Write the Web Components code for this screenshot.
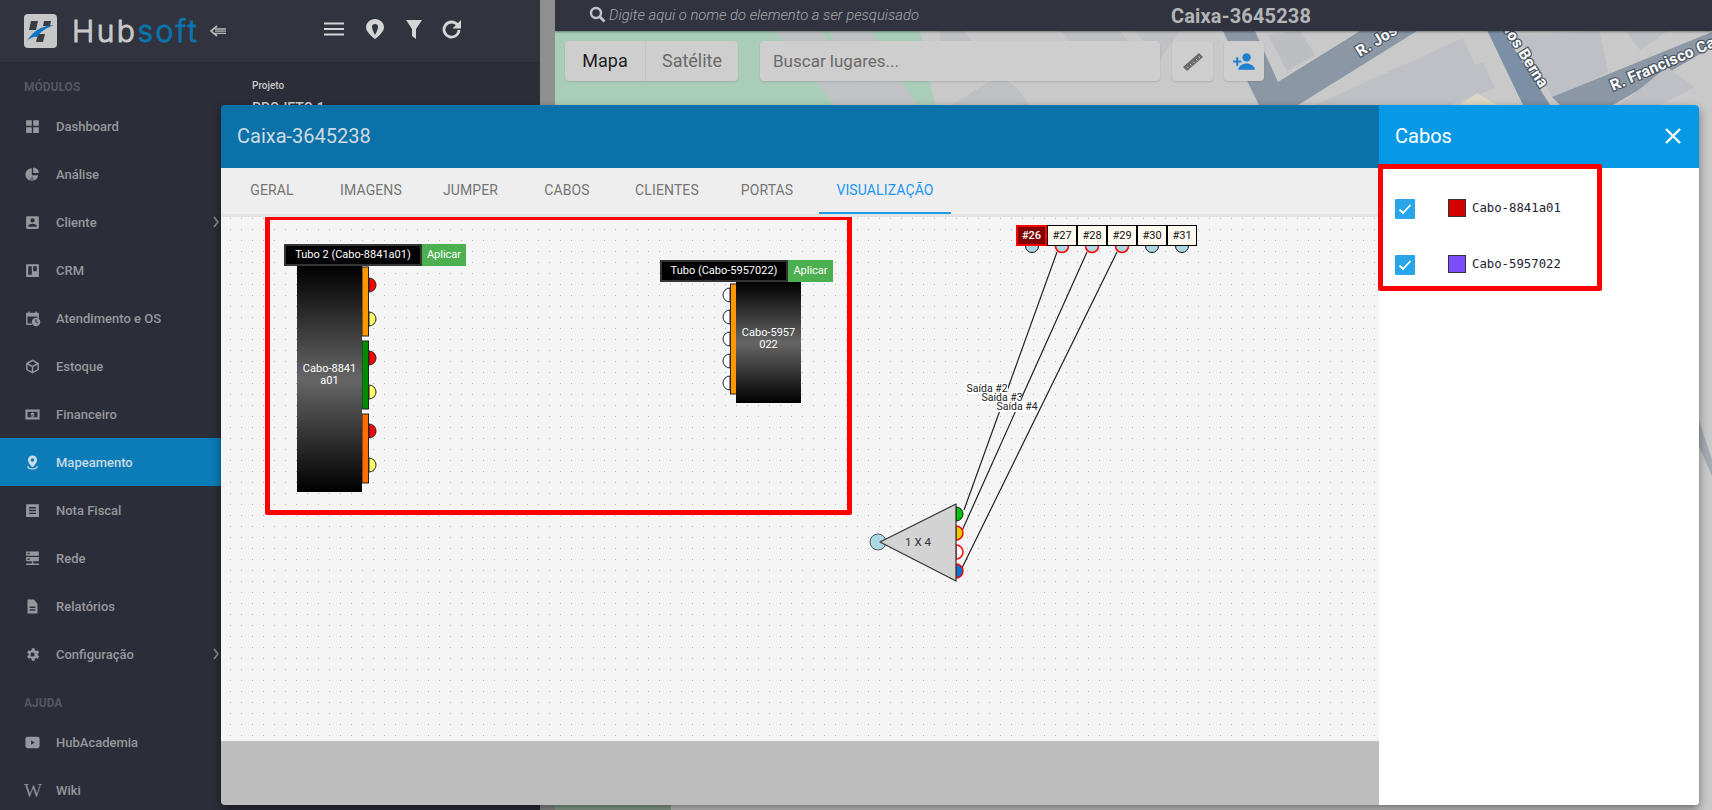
<!DOCTYPE html>
<html lang="pt-BR"><head><meta charset="utf-8"><title>Hubsoft</title>
<style>html,body{margin:0;padding:0;background:#2b2d38;overflow:hidden;font-family:Roboto,sans-serif}</style>
</head><body>
<hub-app></hub-app>
<script>
const ICONS={
dash:'<path d="M3 3h8v8H3zM13 3h8v8h-8zM3 13h8v8H3zM13 13h8v8h-8z"/>',
pie:'<path d="M11 3a9 9 0 1 0 9 10h-9z"/><path d="M13 2v8h8a8 8 0 0 0-8-8z"/><path d="M7 20l5-6 3 7z" fill="#2b2d38" opacity=".45"/>',
user:'<path d="M3 5v14a2 2 0 0 0 2 2h14a2 2 0 0 0 2-2V5a2 2 0 0 0-2-2H5a2 2 0 0 0-2 2zm12 4a3 3 0 1 1-6 0 3 3 0 0 1 6 0zM6 17c0-2 4-3.1 6-3.1s6 1.100 6 3.100v1H6z"/>',
crm:'<path fill-rule="evenodd" d="M3 3h18v18H3zM6 6v12h5V6zM13 6v7h5V6z"/>',
cal:'<path fill-rule="evenodd" d="M6 2h2v2h8V2h2v2h3v8h-2V9H5v10h6v2H3V4h3z"/><path fill-rule="evenodd" d="M17 11a6 6 0 1 0 0 12 6 6 0 0 0 0-12zm-1 2h1.500v3.500l2.500 1.500-.7 1.100-3.300-2z"/>',
box:'<path fill-rule="evenodd" d="M12 2l9 5v10l-9 5-9-5V7zm0 2.600L6.500 7.700 12 10.800l5.500-3.100zM5 9.400v6.400l6 3.300v-6.400zm14 0l-6 3.300v6.400l6-3.300z"/>',
cash:'<path fill-rule="evenodd" d="M2 5h20v14H2zM5 8v8h14V8z"/><path d="M11.300 9h1.400v.9h1.800v1.300h-2.900v.6h2.900v3.100h-1.500v.9h-1.400v-.9H9.700v-1.300h3v-.6h-3V9.900h1.600z"/>',
pin:'<path fill-rule="evenodd" d="M12 2a6.500 6.500 0 0 0-6.500 6.500C5.500 13 12 19 12 19s6.500-6 6.500-10.500A6.500 6.500 0 0 0 12 2zm0 4a2.500 2.500 0 1 1 0 5 2.500 2.500 0 0 1 0-5z"/><path d="M5.500 16.500c-3 2.500 2 5.500 6.500 5.500s9.500-3 6.500-5.500l-1.300 1.300c1.500 1.500-2 2.500-5.200 2.500s-6.700-1-5.200-2.500z"/>',
note:'<path fill-rule="evenodd" d="M3 3h18v18H3zM7 7v2h10V7zM7 11v2h10v-2zM7 15v2h10v-2z"/>',
net:'<path fill-rule="evenodd" d="M3 2h18v6H3zM3 10h18v6H3zM5 4v2h3V4zM5 12v2h3v-2z"/><path d="M11 16h2v3h8v2H3v-2h8z"/>',
doc:'<path fill-rule="evenodd" d="M5 2h9l5 6v14H5zM8 12v2h8v-2zM8 16v2h8v-2z"/>',
gear:'<path fill-rule="evenodd" d="M19.400 13a7.500 7.500 0 0 0 0-2l2.100-1.600-2-3.500-2.500 1a7.500 7.500 0 0 0-1.700-1L15 3.200h-4L10.700 5.900a7.500 7.500 0 0 0-1.700 1l-2.500-1-2 3.500L6.600 11a7.500 7.500 0 0 0 0 2l-2.100 1.600 2 3.500 2.500-1a7.500 7.500 0 0 0 1.700 1l.3 2.700h4l.3-2.700a7.500 7.500 0 0 0 1.700-1l2.500 1 2-3.500zM13 9a3 3 0 1 1-2 0z"/>',
play:'<path fill-rule="evenodd" d="M5 4h14a3 3 0 0 1 3 3v10a3 3 0 0 1-3 3H5a3 3 0 0 1-3-3V7a3 3 0 0 1 3-3zm5 5v6l5-3z"/>',
};
class El extends HTMLElement{
  render(css,html){const s=this.shadowRoot||this.attachShadow({mode:'open'});s.innerHTML=`<style>${css}</style>${html}`;}
}
class NavItem extends El{connectedCallback(){
  const a=this.hasAttribute('active'),arrow=this.hasAttribute('arrow'),i=this.getAttribute('icon');
  const icon=i==='wiki'?'<span class="w">W</span>':`<svg viewBox="0 0 24 24" width="17" height="17" fill="currentColor">${ICONS[i]}</svg>`;
  this.render(`:host{display:flex;align-items:center;height:48px;padding-left:24px;box-sizing:border-box;color:${a?'#c7dbe6':'#97989d'};background:${a?'#0b7cb7':'transparent'};font:500 13px/1 Roboto,sans-serif}
  .i{width:32px;display:flex;align-items:center}.w{font:400 19px/1 "Liberation Serif",serif;color:#8f9095}
  .a{position:absolute;left:212px;width:8px;height:12px}`,
  `<span class="i">${icon}</span><slot></slot>${arrow?'<svg class="a" viewBox="0 0 8 12"><path d="M2 1l4 5-4 5" fill="none" stroke="#8a8b90" stroke-width="1.600"/></svg>':''}`);
}}
class NavLabel extends El{connectedCallback(){
  this.render(`:host{display:block;height:24px;padding:13px 0 3px 24px;font:700 12px/24px Roboto,sans-serif;color:#55575f}:host(:first-of-type){padding:12px 0 3px 24px}`,'<slot></slot>');
}}
class HubLogo extends El{connectedCallback(){
  this.render(`:host{display:flex;align-items:center;height:63px;padding-left:24px;box-sizing:border-box;background:#31343f;border-bottom:1px solid #282a33}
  svg{display:block}.t{margin-left:15px;font:300 30px/1 Inter,sans-serif;letter-spacing:2.500px;color:#c9c9c9;width:133px;white-space:nowrap;-webkit-text-stroke:1px #c9c9c9}.t b{font-weight:300;color:#0b74ac;-webkit-text-stroke:1px #0b74ac}.b{margin-left:5px}`,
  `<svg width="33" height="34" viewBox="0 0 33 34"><rect width="33" height="34" rx="4" fill="#c7c7c7"/><path d="M7 7h7l-2 9H5zM20 7h7l-1 5h-7zM14 20h7l-2 8h-7z" fill="#3a3c44"/><path d="M3 27C9 17 17 12 30 11 22 14 16 18 13 23 10 22 6 24 3 27z" fill="#0b74c4"/></svg><span class="t">Hub<b>soft</b></span>
  <svg class="b" width="16" height="12" viewBox="0 0 16 12"><path d="M7 1L1 6l6 5M1 6h1" fill="none" stroke="#b8b8b8" stroke-width="1.800"/><path d="M5 4h11M5 6.200h11M5 8.400h11" stroke="#b8b8b8" stroke-width="1.300"/></svg>`);
}}
class HubSidebar extends El{connectedCallback(){
  this.render(`:host{display:block;background:#2b2d38;height:810px;overflow:hidden;position:relative}`,`<hub-logo></hub-logo><slot></slot>`);
}}
class ProjectPanel extends El{connectedCallback(){
  this.render(`:host{display:block;background:#2b2d38;height:810px;overflow:hidden;font-family:Roboto,sans-serif}
  .h{height:63px;background:#31343f;border-bottom:1px solid #282a33;box-sizing:border-box;display:flex;align-items:center;color:#d5d5d5;padding:0 0 4px 81px;gap:22px}
  .p{padding:17px 0 0 9px;color:#c9c9c9;font-size:10px;font-weight:500}.v{margin-top:9px;font-size:14px;color:#cfcfcf}`,
  `<div class="h">
  <svg width="20" height="14" viewBox="0 0 20 14"><path d="M0 1.500h20M0 7h20M0 12.500h20" stroke="currentColor" stroke-width="2"/></svg>
  <svg width="18" height="20" viewBox="0 0 18 20"><path fill="currentColor" d="M9 0C4 0 0 3.800 0 8.500 0 13.500 9 20 9 20s9-6.500 9-11.500C18 3.800 14 0 9 0z"/><path fill="#31343f" d="M9 5a3 3 0 0 1 3 3c0 2.500-3 8-3 8s-3-5.500-3-8a3 3 0 0 1 3-3z"/></svg>
  <svg width="16" height="19" viewBox="0 0 16 19"><path fill="currentColor" d="M0 0h16L10 9v10l-4-3V9z"/></svg>
  <svg width="19" height="19" viewBox="0 0 19 19" style="margin-left:-2px"><path d="M15.500 5A7.500 7.500 0 1 0 17 10" fill="none" stroke="currentColor" stroke-width="2.800"/><path fill="currentColor" d="M19 0v8.500h-8.500z"/></svg></div>
  <div class="p">Projeto<div class="v">PROJETO 1</div></div>`);
}}
class MapCtl extends El{connectedCallback(){
  this.render(`:host{display:flex;height:40px;background:#cecece;border-radius:4px;align-items:center;box-sizing:border-box;font:400 18px/40px Roboto,sans-serif;color:#6a6a6a;box-shadow:0 1px 2px rgba(0,0,0,.12);overflow:hidden;flex:none}`,'<slot></slot>');
}}
class MapView extends El{connectedCallback(){
  this.render(`:host{display:block;position:relative;height:810px;overflow:hidden;background:#c9c9c9}
  svg.m{position:absolute;left:0;top:0}
  .top{position:relative;height:31px;background:#31343f;box-shadow:0 1px 2px rgba(0,0,0,.4);display:flex;align-items:center;color:#a0a2a7}
  .s{margin-left:34px;display:block;margin-top:-2px}.q{margin-left:3px;width:562px;font:italic 300 14.800px/1 Roboto,sans-serif;color:#a6a8ac;white-space:nowrap;margin-top:-1px}
  .n{font:700 20px/1 Roboto,sans-serif;color:#b4b5b8;letter-spacing:.15px}
  .bar{position:relative;display:flex;gap:22px;padding:10px 0 0 10px;height:40px}
  .mp{width:81px;text-align:center;color:#1d1d1d;border-right:1px solid #c4c4c4;box-sizing:border-box}.st{width:92px;text-align:center}
  .in{width:400px;padding-left:13px;font-size:17px;margin-left:0}.btn{width:41px;justify-content:center;margin-left:-10px}.btn2{width:40px;justify-content:center;margin-left:-11px}`,
  `<svg class="m" width="1157" height="810" viewBox="555 0 1157 810">
   <rect x="555" width="1157" height="810" fill="#c9c9c9"/>
   <path d="M555 31H920L935 106H555z" fill="#a9cdb8"/>
   <path d="M776 31h44l60 74h-45zM828 31h42l47 74h-39z" fill="#c1c2c6"/>
   <path d="M555 805H671V810H555z" fill="#8fa596"/>
   <path d="M940 31h24l12 14-16 24-20-12zM950 106l50-31 18 14 12 17z" fill="#bfc0c4"/>
   <path d="M1060 31h60l14 18-30 24zM1135 31h45l-20 28z" fill="#bfc0c4"/>
   <path d="M1223 31H1255L1278 82 1360 31H1417L1298 105H1259L1250 87z" fill="#8b97a5"/>
   <path d="M1268 35L1300 31 1315 55 1287 71z" fill="#bdbec2"/>
   <path d="M1463 38L1475 65 1483 62 1495 88 1450 105H1315z" fill="#bfc0c5"/>
   <path d="M1477 93L1497 105H1460z" fill="#dcd6c6"/>
   <path d="M1487 30H1502L1550 105H1523z" fill="#7b8fa7"/>
   <path d="M1517 35L1600 31 1608 72 1553 98z" fill="#bfc0c5"/>
   <path d="M1552 97L1712 32V47L1613 105H1560z" fill="#8b97a5"/>
   <path d="M1667 67L1695 87 1660 105H1620zM1625 31H1668L1640 50z" fill="#bfc0c5"/>
   <path d="M1699 420l13 40v16l-13-30z" fill="#a4aab3"/>
   <g font-family="Roboto,sans-serif" font-weight="700" font-size="15.500" letter-spacing=".3" fill="#fff" stroke="#4b5563" stroke-width="2.500" style="paint-order:stroke">
    <text transform="translate(1360 57) rotate(-32)">R. Jos</text>
    <text transform="translate(1504 31) rotate(58)">los Berna</text>
    <text transform="translate(1613 91) rotate(-23.500)">R. Francisco Ca</text>
   </g></svg>
  <div class="top"><svg class="s" width="17" height="17" viewBox="0 0 17 17"><circle cx="7" cy="7" r="5" fill="none" stroke="#c4c5c8" stroke-width="2.400"/><path d="M10.500 10.500L15.500 15.500" stroke="#c4c5c8" stroke-width="2.800"/></svg><span class="q">Digite aqui o nome do elemento a ser pesquisado</span><span class="n">Caixa-3645238</span></div>
  <div class="bar">
   <map-ctl><span class="mp">Mapa</span><span class="st">Satélite</span></map-ctl>
   <map-ctl class="in">Buscar lugares...</map-ctl>
   <map-ctl class="btn"><svg width="24" height="24" viewBox="0 0 24 24"><path d="M2 18L18 4l4 4L6 22z" fill="#6a6a6a"/><path d="M6 17.500l1.500 1.500M9 15l1.500 1.500M12 12.500l1.500 1.500M15 10l1.500 1.500M17.500 7.500l1.500 1.500" stroke="#cecece" stroke-width="1"/></svg></map-ctl>
   <map-ctl class="btn2"><svg width="25" height="25" viewBox="0 0 24 24" fill="#1f7fd0"><circle cx="14" cy="8" r="4"/><path d="M6 20c0-4 5-6 8-6s8 2 8 6z"/><path d="M1 11h3V8h2v3h3v2H6v3H4v-3H1z"/></svg></map-ctl>
  </div>`);
}}
class TabBar extends El{connectedCallback(){
  this.render(`:host{display:flex;height:49px;background:#eee;border-bottom:3px solid #e4e4e4;box-sizing:border-box;padding-left:1px}`,'<slot></slot>');
}}
class TabItem extends El{connectedCallback(){
  const a=this.hasAttribute('active');
  this.render(`:host{display:block;height:46px;width:${this.getAttribute('w')}px;text-align:center;font:400 14px/44px Roboto,sans-serif;letter-spacing:.12px;text-transform:uppercase;color:${a?'#2196f3':'#757575'};box-sizing:border-box;margin-left:${this.getAttribute('m')||0}px;${a?'border-bottom:2px solid #1e9be8;':''}}`,'<slot></slot>');
}}
class TubeHead extends El{connectedCallback(){
  const x=this.getAttribute('x'),y=this.getAttribute('y'),w=this.getAttribute('w'),b=this.getAttribute('b');
  this.render(`:host{position:absolute;left:${x-221}px;top:${y-217}px;display:flex;height:22px;font:400 11px/18px Roboto,sans-serif;color:#fff;z-index:2}
  .t{width:${w}px;box-sizing:border-box;background:#000;border:2px solid #333;text-align:center;white-space:nowrap}.a{width:${b}px;background:#4caf50;text-align:center;line-height:22px;box-sizing:border-box}`,
  `<div class="t"><slot></slot></div><div class="a">Aplicar</div>`);
}}
class CableBody extends El{connectedCallback(){
  const a=n=>this.getAttribute(n);
  this.render(`:host{position:absolute;left:${a('x')-221}px;top:${a('y')-217}px;width:65px;height:${a('h')}px;box-sizing:border-box;padding-bottom:8px;display:flex;align-items:center;justify-content:center;text-align:center;background:linear-gradient(#000 0,#666 50%,#000 100%);color:#fff;font:400 11px/12px Roboto,sans-serif;z-index:1}`,'<span><slot></slot></span>');
}}
class PortStrip extends El{connectedCallback(){
  this.render(`:host{position:absolute;left:795px;top:8px;display:flex;font:400 11px/19px Roboto,sans-serif;color:#111;z-index:2}`,'<slot></slot>');
}}
class PortCell extends El{connectedCallback(){
  const a=this.hasAttribute('active');
  this.render(`:host{display:block;width:30px;height:21px;box-sizing:border-box;text-align:center;background:${a?'#800000':'#fffaf0'};color:${a?'#fff':'#111'};border:1px solid #000;margin-right:0;${a?'border:2px solid #f00;width:31px;line-height:17px;font-weight:500;':''}}`,'<slot></slot>');
}}
class DiagramCanvas extends El{connectedCallback(){
  const half=(x,y,r,f,s,sw,dir)=>`<path d="M${x} ${y-r}A${r} ${r} 0 0 ${dir>0?1:0} ${x} ${y+r}z" fill="${f}" stroke="${s}" stroke-width="${sw}"/>`;
  let g='';
  [[285,'#f00'],[319,'#ff6'],[358,'#f00'],[392,'#ff6'],[431,'#f00'],[465,'#ff6']].forEach(c=>g+=half(369,c[0],7,c[1],'#222',1,1));
  [[267,336,'#ff9800'],[341,409,'#008c00'],[414,483,'#ff6f00']].forEach(c=>g+=`<rect x="362" y="${c[0]}" width="6.500" height="${c[1]-c[0]}" fill="${c[2]}" stroke="#222" stroke-width="1"/>`);
  [295,317,339,361,383].forEach(y=>g+=half(730,y,7,'#fff','#222',1,-1));
  g+=`<rect x="730.500" y="284" width="6" height="110" fill="#ff9800" stroke="#222" stroke-width="1"/>`;
  [[1032,0],[1062,1],[1092,1],[1122,1],[1152,0],[1182,0]].forEach(c=>g+=`<circle cx="${c[0]}" cy="246" r="6.500" fill="#add8e6" stroke="${c[1]?'#f00':'#111'}" stroke-width="${c[1]?1.600:1}"/>`);
  g+=`<path d="M1057 252L964 510M1087 252L961 533M1117 252L961 570" stroke="#222" stroke-width="1.200" fill="none"/>`;
  g+=`<circle cx="878" cy="542" r="8" fill="#add8e6" stroke="#555" stroke-width="1"/>`;
  [[514,'#00c800','#111',1],[533,'#e0d000','#f00',1.500],[552,'#fff','#f00',1.500],[571,'#0077d5','#f00',1.500]].forEach(c=>g+=half(956,c[0],7,c[1],c[2],c[3],1));
  g+=`<path d="M880 542L956 504V581z" fill="#d3d3d3" stroke="#333" stroke-width="1.200" stroke-linejoin="round"/>`;
  g+=`<text x="918" y="546" text-anchor="middle" font-family="Roboto,sans-serif" font-size="11.500" fill="#333">1 X 4</text>`;
  const lab=(x,y,w,t)=>`<rect x="${x}" y="${y}" width="${w}" height="11" fill="#fff"/><text x="${x+.5}" y="${y+9}" font-family="Roboto,sans-serif" font-size="10.500" fill="#222">${t}</text>`;
  g+=lab(966,383,42,'Saída #2')+lab(981,392,41,'Saída #3')+lab(996,401,42,'Saída #4');
  this.render(`:host{display:block;position:relative;flex:1;overflow:hidden;background-color:#f5f5f5;background-image:radial-gradient(circle at .5px .5px,#b8b8b8 .7px,transparent 1px);background-size:11px 11px;background-position:9px 1px}
  svg{position:absolute;left:0;top:0}.hl{position:absolute;left:44px;top:-2px;width:587px;height:300px;border:5px solid #f00;box-sizing:border-box;border-radius:2px;z-index:3}`,
  `<svg width="1158" height="524" viewBox="221 217 1158 524">${g}</svg><div class="hl"></div>
  <tube-head x="284" y="244" w="138" b="44">Tubo 2 (Cabo-8841a01)</tube-head><cable-body x="297" y="266" h="226">Cabo-8841<br>a01</cable-body>
  <tube-head x="660" y="260" w="128" b="45">Tubo (Cabo-5957022)</tube-head><cable-body x="736" y="282" h="121">Cabo-5957<br>022</cable-body>
  <port-strip><port-cell active>#26</port-cell><port-cell>#27</port-cell><port-cell>#28</port-cell><port-cell>#29</port-cell><port-cell>#30</port-cell><port-cell>#31</port-cell></port-strip>`);
}}
class CableRow extends El{connectedCallback(){
  this.render(`:host{display:flex;height:20px}
  .c{width:20px;height:20px;border-radius:1px;background:#29a6e9;display:flex;align-items:center;justify-content:center}
  .s{width:18px;height:18px;box-sizing:border-box;border:1px solid #333;background:${this.getAttribute('color')};margin-left:33px}
  .t{margin-left:6px;font:400 12.300px/18px "DejaVu Sans Mono","Liberation Mono",monospace;color:#223}`,
  `<span class="c"><svg width="14" height="12" viewBox="0 0 14 12"><path d="M1.500 6.500L5 10l7.500-8" fill="none" stroke="#fff" stroke-width="1.800"/></svg></span><span class="s"></span><span class="t"><slot></slot></span>`);
}}
class CablePanel extends El{connectedCallback(){
  this.render(`:host{display:flex;flex-direction:column;width:320px;flex:none;background:#fff}
  .h{height:63px;background:#0899e6;color:#fff;display:flex;align-items:center;justify-content:space-between;padding:0 16px 2px;box-sizing:border-box;font:400 20px/1 Roboto,sans-serif}
  .b{padding:31px 0 0 16px;display:flex;flex-direction:column;gap:36px}`,
  `<div class="h"><span>Cabos</span><svg width="16" height="16" viewBox="0 0 16 16" style="margin-right:2px"><path d="M1 1l14 14M15 1L1 15" stroke="#fff" stroke-width="2.300"/></svg></div><div class="b"><slot></slot></div>`);
}}
class BoxModal extends El{connectedCallback(){
  this.render(`:host{position:absolute;left:221px;top:105px;width:1478px;height:700px;display:flex;border-radius:4px;overflow:hidden;box-shadow:0 4px 10px rgba(0,0,0,.45)}
  .l{flex:1;display:flex;flex-direction:column;min-width:0}
  .h{height:63px;background:#0b72a9;color:#cfdbe2;display:flex;align-items:center;padding:0 0 2px 16px;box-sizing:border-box;font:400 20px/1 Roboto,sans-serif;flex:none}
  .f{height:64px;background:#bdbdbd;flex:none}
  .hl{position:absolute;left:1157px;top:59px;width:224px;height:127px;border:5px solid #f00;box-sizing:border-box;border-radius:2px}`,
  `<div class="l"><div class="h">Caixa-3645238</div><tab-bar>
   <tab-item w="100">Geral</tab-item><tab-item w="98">Imagens</tab-item><tab-item w="101">Jumper</tab-item><tab-item w="92">Cabos</tab-item><tab-item w="108">Clientes</tab-item><tab-item w="92">Portas</tab-item><tab-item w="132" m="6" active>Visualização</tab-item></tab-bar>
   <diagram-canvas></diagram-canvas><div class="f"></div></div>
  <cable-panel><cable-row color="#d50000">Cabo-8841a01</cable-row><cable-row color="#7c4dff">Cabo-5957022</cable-row></cable-panel><div class="hl"></div>`);
}}
class HubApp extends El{connectedCallback(){
  this.render(`:host{display:grid;grid-template-columns:243px 297px 15px 1fr;width:1712px;height:810px;position:relative;overflow:hidden}
  .g{background:#8f8f8f}`,
  `<hub-sidebar>
   <nav-label>MÓDULOS</nav-label>
   <nav-item icon="dash">Dashboard</nav-item><nav-item icon="pie">Análise</nav-item><nav-item icon="user" arrow>Cliente</nav-item><nav-item icon="crm">CRM</nav-item><nav-item icon="cal">Atendimento e OS</nav-item><nav-item icon="box">Estoque</nav-item><nav-item icon="cash">Financeiro</nav-item><nav-item icon="pin" active>Mapeamento</nav-item><nav-item icon="note">Nota Fiscal</nav-item><nav-item icon="net">Rede</nav-item><nav-item icon="doc">Relatórios</nav-item><nav-item icon="gear" arrow>Configuração</nav-item>
   <nav-label>AJUDA</nav-label>
   <nav-item icon="play">HubAcademia</nav-item><nav-item icon="wiki">Wiki</nav-item>
  </hub-sidebar><project-panel></project-panel><div class="g"></div><map-view></map-view><box-modal></box-modal>`);
}}
const defs={'nav-item':NavItem,'nav-label':NavLabel,'hub-logo':HubLogo,'hub-sidebar':HubSidebar,'project-panel':ProjectPanel,'map-ctl':MapCtl,'map-view':MapView,'tab-bar':TabBar,'tab-item':TabItem,'tube-head':TubeHead,'cable-body':CableBody,'port-strip':PortStrip,'port-cell':PortCell,'diagram-canvas':DiagramCanvas,'cable-row':CableRow,'cable-panel':CablePanel,'box-modal':BoxModal,'hub-app':HubApp};
for(const k in defs)customElements.define(k,defs[k]);
</script>
</body></html>
